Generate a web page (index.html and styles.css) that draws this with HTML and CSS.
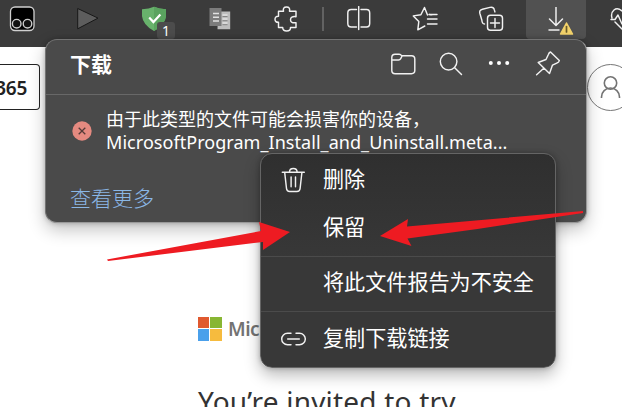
FILE: index.html
```html
<!DOCTYPE html>
<html lang="zh-CN">
<head>
<meta charset="utf-8">
<title>下载</title>
<link rel="stylesheet" href="styles.css">
</head>
<body>
<div class="browser">
  <header class="toolbar">
    <svg class="tool monkey" viewBox="0 0 26 26"><rect x="1.5" y="1" width="23.5" height="23.5" rx="4.5" fill="#000" stroke="#d0d0d0" stroke-width="1.3"/><g fill="#111" stroke="#ccc" stroke-width="1.4"><circle cx="7.7" cy="17.7" r="4.3"/><circle cx="18.5" cy="17.7" r="4.3"/></g></svg>
    <svg class="tool play" viewBox="0 0 26 26"><path d="M2.7 2.5v20.3L23 12.1z" fill="#5d5d5d" stroke="#181818" stroke-width="1"/></svg>
    <div class="tool shield">
      <svg viewBox="0 0 26 26"><path d="M0 3.2Q7 3 12 .7q5 2.3 12 2.5v7Q23 19 12 25 1 19 0 10.2z" fill="#68b26c"/><path d="M12 .7q5 2.3 12 2.5v7Q23 19 12 25z" fill="#5aa35f"/><path d="m7.2 11.5 4.2 4.6 7-7.6" fill="none" stroke="#fff" stroke-width="2.2"/></svg>
      <span class="badge">1</span>
    </div>
    <svg class="tool docs" viewBox="0 0 26 26"><path d="M10 5.4h12.2v17.8H9.5z" fill="#bdbdbd"/><path d="M1.5 2h12v18h-12z" fill="#7c7c7c"/><path d="M5 7.5h6M5 11.3h6M5 15h6M14.5 9h5M14.5 13h5M14.5 17h5" stroke="#e1e1e1" stroke-width="1.4"/><path d="M14.5 10.5h5M14.5 14.7h5M14.5 18.7h5" stroke="#777" stroke-width=".8"/></svg>
    <svg class="tool line" viewBox="0 0 26 26"><path d="M4.5 5.2h5q-1-4.2 3-4.2t3 4.2H22v5.5q-5.5-.7-5.5 3t5.5 3v4.8h-5.5q.2 3.5-3.8 3.5t-4-3.5H4.5v-5.2q-3.5.2-3.5-3t3.5-3z"/></svg>
    <i class="divider"></i>
    <svg class="tool line" viewBox="0 0 26 26"><path d="M10.5 3.5H5.2Q1.8 3.5 1.8 7v10.5q0 3.5 3.4 3.5h5.3M15 3.5h5.5q3.2 0 3.2 3.5v10.5q0 3.5-3.2 3.5H15M12.7.6v23"/></svg>
    <svg class="tool line" viewBox="0 0 26 26"><path d="m15.5 9-3-7.5-3.6 7.2-7.6 1.2 5.5 5.7-1 8.2 7-3.8M17 8.5q2 .3 3 .2M15.5 13H25M15.5 18H25M17.5 8.5H25"/></svg>
    <svg class="tool line" viewBox="0 0 26 26"><rect x="9.5" y="9.2" width="15" height="15" rx="3"/><path d="M17 12.5v9M12.5 17h9M6.5 18C4.5 18 4 16 3.8 14L1.9 7.5Q1 4 4.5 3.2L12 1.4q3.5-.8 4.2 2l.7 2.5"/></svg>
    <div class="download">
      <svg class="line" viewBox="0 0 28 30"><path d="M9 0v18M2.5 12 9 18.5 15.5 12M2 23h10"/><path d="M19.5 16 25.5 27h-12z" fill="#f3d36b" stroke="#f3d36b" stroke-width="1.5" stroke-linejoin="round"/><path d="M19.5 19.5v5.5" stroke="#695a28" stroke-width="1.7"/></svg>
    </div>
    <svg class="tool heart line" viewBox="0 0 26 26"><path d="M2 12q-1.5-5 2-8t8 1q4-4 8-1M1 13.5h4l3-4.5 4 9 2-4h6M5 16l8 8"/></svg>
  </header>
  <main class="page">
    <div class="product">365</div>
    <div class="avatar"><svg viewBox="0 0 24 28"><circle cx="11.5" cy="9" r="6.2"/><path d="M2.5 24v-1a9 9 0 0 1 18 0v1"/></svg></div>
    <section class="invite">
      <div class="brand"><span class="tiles"><i class="red"></i><i class="green"></i><i class="blue"></i><i class="gold"></i></span><b>Microsoft</b></div>
      <h1>You’re invited to try</h1>
    </section>
  </main>

  <section class="panel">
    <header class="panel-head">
      <h2>下载</h2>
      <div class="actions">
        <svg class="line" viewBox="0 0 26 26"><path d="M.8 6.5q0-3.3 3.3-3.3h4q1.6 0 2.7 1.6h9.7q3.3 0 3.3 3.3v11.5q0 3.1-3.3 3.1H4.1q-3.3 0-3.3-3.1zM.8 9h6.7q1.5 0 2.2-1.4l1.4-2.6"/></svg>
        <svg class="line" viewBox="0 0 26 26"><circle cx="9.6" cy="10.6" r="8.3"/><path d="m15.7 16.7 6.8 6.8"/></svg>
        <svg class="dots" viewBox="0 0 26 26"><circle cx="3.8" cy="11.9" r="2"/><circle cx="12" cy="11.9" r="2"/><circle cx="20.2" cy="11.9" r="2"/></svg>
        <svg class="line" viewBox="0 0 26 26"><path d="m15.5 1 8.8 8.6q-.5 1.8-2 2.2l-4.8 2.3-3 8.3L3.2 11.5l7.8-3 2.5-5.3q.5-1.5 2-2.2zM8.8 17.2l-7.2 6.5"/></svg>
      </div>
    </header>
    <div class="entry">
      <svg class="blocked" viewBox="0 0 20 20"><circle cx="10" cy="10" r="9.7"/><path d="m6.7 6.7 6.6 6.6m0-6.6-6.6 6.6"/></svg>
      <div class="message"><div>由于此类型的文件可能会损害你的设备，</div><div class="filename">MicrosoftProgram_Install_and_Uninstall.meta...</div></div>
    </div>
    <a class="more">查看更多</a>
  </section>

  <nav class="menu">
    <div class="item"><svg class="line" viewBox="0 0 26 26"><path d="M2.3 5.3h22M9.5 5q0-3.5 3.8-3.5T17.1 5M4.7 5.5l1.8 16q.3 3 3.2 3h7.2q2.9 0 3.2-3l1.8-16M11.1 10v9.7M15.5 10v9.7"/></svg><span>删除</span></div>
    <div class="item"><span>保留</span></div>
    <div class="item report"><span>将此文件报告为不安全</span></div>
    <div class="item copy"><svg class="line" viewBox="0 0 26 26"><path d="M11 7.2H7.5a5.8 5.8 0 0 0 0 11.6H11M16 7.2h3.5a5.8 5.8 0 0 1 0 11.6H16M7.7 13h11.6"/></svg><span>复制下载链接</span></div>
  </nav>
  <svg class="arrows" viewBox="0 0 622 407"><path d="M107 259.5 261 231l-2-9 31 10-27 18v-8L108 261zM583 211l-176 15.5 1-7.5-28 17 31.5 10-4-7.5 70-9.5L583 213z"/></svg>
</div>
</body>
</html>
```
FILE: styles.css
```css
* { box-sizing: border-box; }
body { margin: 0; background: #fff; font-family: "Noto Sans", "Noto Sans CJK SC", sans-serif; }
.browser { position: relative; width: 622px; height: 407px; overflow: hidden; }
svg { display: block; }
.line { fill: none; stroke: #f1f1f1; stroke-width: 1.45; stroke-linecap: round; stroke-linejoin: round; }

.toolbar { display: flex; height: 47px; padding-left: 9px; background: #3b3b3b; }
.tool { flex: none; width: 26px; height: 26px; margin: 6px 40px 0 0; }
.play { margin-right: 41px; }
.shield { position: relative; }
.badge { position: absolute; left: 15px; top: 16px; width: 18px; height: 17px; border-radius: 3px; background: #4c4c4c; color: #fff; font-size: 14px; line-height: 17px; text-align: center; }
.divider { flex: none; width: 2px; height: 24px; margin: 7px 22px 0 -18px; background: #626262; }
.download { flex: none; width: 60px; height: 39px; margin: 0 24px 0 -18px; padding: 7px 0 0 21px; background: #515151; border-radius: 0 0 4px 4px; }
.download svg { width: 28px; height: 30px; }
.heart { margin-right: 0; }

.page { display: grid; grid-template-columns: 40px 1fr 35px; grid-template-rows: 269px 1fr; height: 360px; }
.product { display: flex; justify-content: flex-end; height: 46px; margin-top: 17px; padding-right: 12px; border: 1px solid #222; border-left: 0; border-radius: 0 4px 4px 0; font-size: 19px; font-weight: 600; line-height: 46px; color: #222; letter-spacing: -.3px; }
.avatar { grid-column: 3; width: 47px; height: 47px; margin-top: 17px; border: 1px solid #777; border-radius: 50%; padding: 9px 11px; }
.avatar svg { width: 24px; height: 28px; fill: none; stroke: #737373; stroke-width: 1.6; }
.invite { grid-column: 1 / 4; padding-left: 198px; }
.brand { display: flex; align-items: center; gap: 6px; height: 25px; color: #737373; font-size: 19px; }
.brand b { font-weight: 600; letter-spacing: -.5px; }
.tiles { display: grid; grid-template-columns: 11px 12px; grid-template-rows: 11px 12px; gap: 1px; }
.red { background: #e0592f; } .green { background: #88b633; } .blue { background: #4aa0eb; } .gold { background: #f6bb3e; }
h1 { margin: 41px 0 0; font-size: 28px; font-weight: 400; line-height: 38px; letter-spacing: .2px; color: #333; white-space: nowrap; }

.panel { position: absolute; left: 45px; top: 39px; width: 542px; height: 184px; background: #4a4a4a; border: 1px solid #737373; border-right-color: #999; border-bottom-color: #999; border-radius: 12px; box-shadow: 0 7px 17px rgba(0,0,0,.24), 0 0 5px rgba(0,0,0,.25); color: #fff; }
.panel-head { display: flex; justify-content: space-between; height: 55px; padding: 11px 25px 0 24px; border-bottom: 1px solid #686868; }
h2 { margin: -1px 0 0; font-size: 21px; line-height: 29px; }
.actions { display: flex; gap: 22px; }
.actions svg { width: 26px; height: 26px; }
.dots { fill: #fff; }
.entry { display: flex; height: 90px; padding: 13px 0 0 26px; }
.blocked { flex: none; width: 20px; height: 20px; margin: 13px 14px 0 0; fill: #e58a80; }
.blocked path { stroke: #553b38; stroke-width: 1.3; }
.message { font-size: 18px; line-height: 23px; white-space: nowrap; }
.filename { letter-spacing: .05px; }
.more { display: block; margin: -1px 24px 0; font-size: 21px; line-height: 29px; color: #8ab7e6; font-weight: 300; }

.menu { position: absolute; left: 260px; top: 153px; width: 296px; height: 215px; padding-top: 2px; border: 1px solid #656565; border-radius: 12px; background: linear-gradient(#2f2f2f, #383838 50%); box-shadow: 0 7px 16px rgba(0,0,0,.28), 0 0 5px rgba(0,0,0,.25); color: #fff; }
.item { display: grid; grid-template-columns: 26px 1fr; column-gap: 17px; align-items: center; height: 48px; padding-left: 19px; font-size: 21.1px; line-height: 30px; white-space: nowrap; }
.item span { grid-column: 2; padding-bottom: 2px; }
.item svg { width: 26px; height: 26px; }
.report { height: 56px; margin-top: 4px; border: solid #4b4b4b; border-width: 1px 0; }
.report span { padding-bottom: 5px; }
.copy { height: 54px; }
.copy span { padding-bottom: 3px; }
.arrows { position: absolute; inset: 0; width: 622px; height: 407px; fill: #ee1b22; pointer-events: none; }
```
